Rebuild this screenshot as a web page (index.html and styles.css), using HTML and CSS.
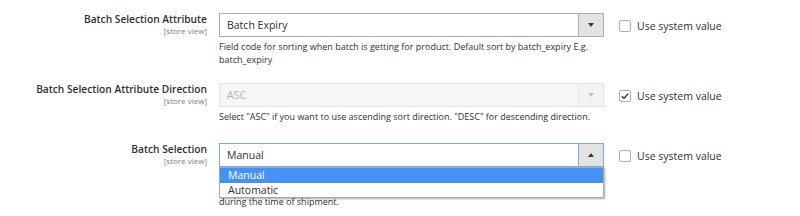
FILE: index.html
```html
<!DOCTYPE html>
<html lang="en">
<head>
    <meta charset="UTF-8">
    <meta name="viewport" content="width=device-width, initial-scale=1.0">
    <title>Batch Selection Settings</title>
    <link rel="stylesheet" href="styles.css">
</head>
<body>
    <div class="fieldset">
        <div class="row">
            <div class="label">
                <span class="title">Batch Selection Attribute</span>
                <span class="scope">[store view]</span>
            </div>
            <div class="value">
                <div class="select">
                    <span class="select-text">Batch Expiry</span>
                    <span class="arrow"><span class="tri-down"></span></span>
                </div>
                <p class="note">Field code for sorting when batch is getting for product. Default sort by batch_expiry E.g. batch_expiry</p>
            </div>
            <label class="use-default">
                <span class="checkbox"></span>
                <span>Use system value</span>
            </label>
        </div>

        <div class="row">
            <div class="label">
                <span class="title">Batch Selection Attribute Direction</span>
                <span class="scope">[store view]</span>
            </div>
            <div class="value">
                <div class="select disabled">
                    <span class="select-text">ASC</span>
                    <span class="arrow"><span class="tri-down"></span></span>
                </div>
                <p class="note">Select "ASC" if you want to use ascending sort direction. "DESC" for descending direction.</p>
            </div>
            <label class="use-default">
                <span class="checkbox checked">
                    <svg width="10" height="10" viewBox="0 0 10 10"><path d="M1.8 5.2 L4 7.3 L8.3 2.6" fill="none" stroke="#303030" stroke-width="1.4"/></svg>
                </span>
                <span>Use system value</span>
            </label>
        </div>

        <div class="row">
            <div class="label">
                <span class="title">Batch Selection</span>
                <span class="scope">[store view]</span>
            </div>
            <div class="value">
                <div class="select focused">
                    <span class="select-text">Manual</span>
                    <span class="arrow"><span class="tri-up"></span></span>
                    <!-- open list covers the first lines of the note -->
                    <div class="dropdown">
                        <div class="option selected">Manual</div>
                        <div class="option">Automatic</div>
                    </div>
                </div>
                <p class="note covered">during the time of shipment.</p>
            </div>
            <label class="use-default">
                <span class="checkbox"></span>
                <span>Use system value</span>
            </label>
        </div>
    </div>
</body>
</html>
```

FILE: styles.css
```css
body {
    margin: 0;
    background: #fff;
    font-family: "Open Sans", "Noto Sans", sans-serif;
    color: #303030;
}
.fieldset {
    padding-top: 13px;
}
.row {
    display: flex;
    align-items: flex-start;
    margin-bottom: 17px;
}
.label {
    width: 207px;
    margin-top: -1px;
    text-align: right;
    flex-shrink: 0;
}
.title {
    display: block;
    font-size: 10.2px;
    font-weight: 600;
    line-height: 14px;
}
.scope {
    display: block;
    font-size: 8px;
    line-height: 10px;
    color: #808080;
}
.value {
    width: 385px;
    min-height: 43px;
    margin-left: 12px;
    flex-shrink: 0;
}
.select {
    position: relative;
    display: flex;
    height: 24px;
    box-sizing: border-box;
    border: 1px solid #adadad;
    background: #fff;
    font-size: 10.5px;
    line-height: 22px;
}
.select-text {
    flex: 1;
    padding-left: 7px;
}
.arrow {
    width: 24px;
    border-left: 1px solid #adadad;
    background: #e3e3e3;
    display: flex;
    align-items: center;
    justify-content: center;
}
.tri-down {
    border-left: 3px solid transparent;
    border-right: 3px solid transparent;
    border-top: 4px solid #41362f;
}
.tri-up {
    border-left: 3px solid transparent;
    border-right: 3px solid transparent;
    border-bottom: 4px solid #41362f;
}
.select.disabled {
    border-color: #e4e4e4;
    background: #f6f6f6;
    color: #b0b0b0;
}
.select.disabled .arrow {
    border-left-color: #e4e4e4;
    background: #f3f3f3;
}
.select.disabled .tri-down {
    border-top-color: #c0c0c0;
}
.select.focused {
    border-color: #7ea9e4;
}
.select.focused .arrow {
    border-left-color: #7ea9e4;
}
.dropdown {
    position: absolute;
    top: 23px;
    left: -1px;
    right: -1px;
    border: 1px solid #a8a8a8;
    background: #fff;
    box-shadow: 1px 1px 2px rgba(0, 0, 0, 0.35);
    z-index: 2;
}
.option {
    height: 14.5px;
    line-height: 14.5px;
    padding-left: 8px;
    font-size: 10.5px;
    color: #303030;
}
.option.selected {
    background: #4592f7;
    color: #fff;
}
.note {
    margin: 4px 0 0;
    font-size: 9px;
    line-height: 12.6px;
}
.note.covered {
    padding-top: 25.2px;
}
.use-default {
    display: flex;
    align-items: center;
    margin-left: 15px;
    margin-top: 6px;
    font-size: 10.5px;
}
.checkbox {
    width: 12px;
    height: 12px;
    box-sizing: border-box;
    border: 1px solid #adadad;
    border-radius: 2px;
    background: #fff;
    margin-right: 6px;
    display: flex;
    align-items: center;
    justify-content: center;
}
```
